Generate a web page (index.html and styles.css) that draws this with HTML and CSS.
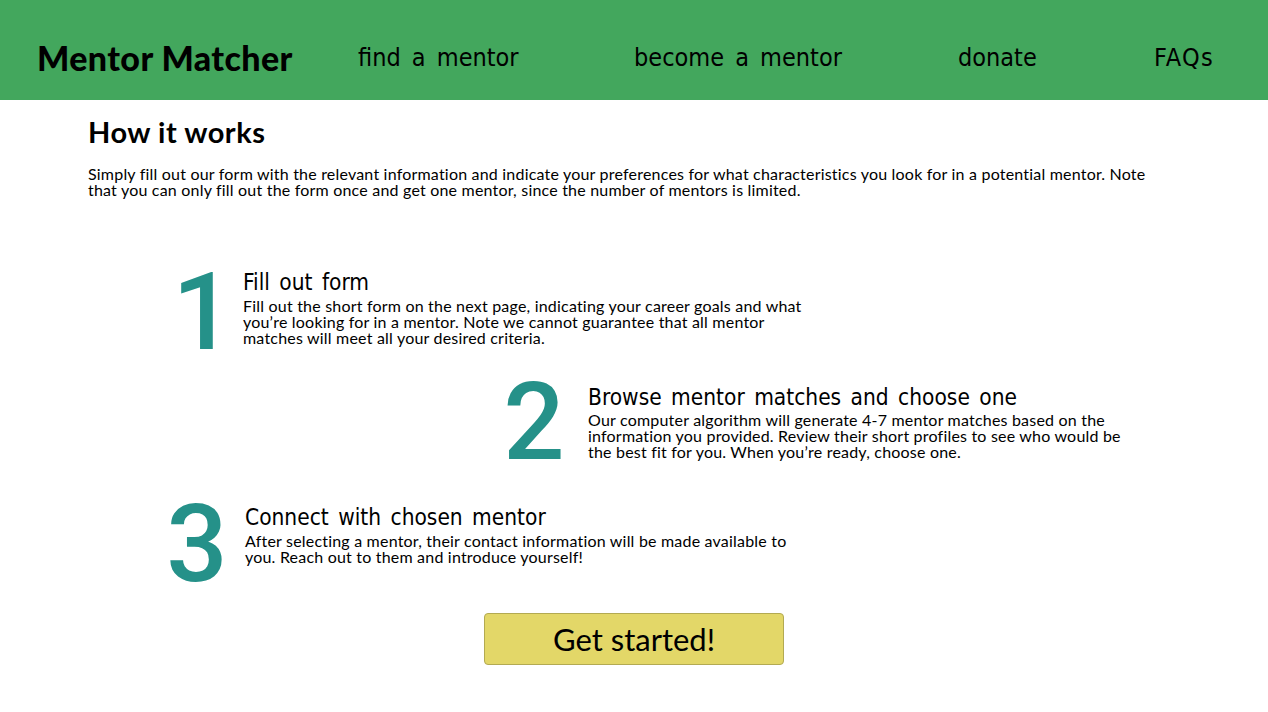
FILE: index.html
```html
<!DOCTYPE html>
<html>
<head>
<meta charset="utf-8">
<link rel="stylesheet" href="styles.css">
</head>
<body>
<header class="topbar">
  <div class="brand">Mentor Matcher</div>
  <nav class="nav">
    <a class="nav-link nav-find">find a mentor</a>
    <a class="nav-link nav-become">become a mentor</a>
    <a class="nav-link nav-donate">donate</a>
    <a class="nav-link nav-faq">FAQs</a>
  </nav>
</header>
<main class="content">
  <h1 class="title">How it works</h1>
  <p class="intro">Simply fill out our form with the relevant information and indicate your preferences for what characteristics you look for in a potential mentor. Note that you can only fill out the form once and get one mentor, since the number of mentors is limited.</p>
  <section class="steps">
    <div class="step step-1">
      <div class="num">1</div>
      <div class="step-text">
        <h2 class="step-title">Fill out form</h2>
        <p class="step-body">Fill out the short form on the next page, indicating your career goals and what you’re looking for in a mentor. Note we cannot guarantee that all mentor matches will meet all your desired criteria.</p>
      </div>
    </div>
    <div class="step step-2">
      <div class="num">2</div>
      <div class="step-text">
        <h2 class="step-title">Browse mentor matches and choose one</h2>
        <p class="step-body">Our computer algorithm will generate 4-7 mentor matches based on the information you provided. Review their short profiles to see who would be the best fit for you. When you’re ready, choose one.</p>
      </div>
    </div>
    <div class="step step-3">
      <div class="num">3</div>
      <div class="step-text">
        <h2 class="step-title">Connect with chosen mentor</h2>
        <p class="step-body">After selecting a mentor, their contact information will be made available to you. Reach out to them and introduce yourself!</p>
      </div>
    </div>
  </section>
  <div class="cta-row">
    <button class="cta">Get started!</button>
  </div>
</main>
</body>
</html>
```
FILE: styles.css
```css
* { box-sizing: border-box; }
html, body { margin: 0; padding: 0; background: #fff; }
body { font-family: Lato, "Noto Sans", sans-serif; color: #000; }

.topbar {
  height: 100px;
  background: #43a75d;
  display: flex;
  align-items: center;
  padding-left: 37px;
  padding-top: 14px;
}
.brand {
  font-family: Lato, sans-serif;
  font-weight: 900;
  font-size: 34px;
  letter-spacing: 0.4px;
  width: 321px;
}
.nav { display: flex; align-items: center; }
.nav-link {
  font-family: "Liberation Sans Narrow", "DejaVu Sans Condensed", "Roboto Condensed", sans-serif;
  font-size: 25px;
  word-spacing: 4px;
  color: #000;
}
.nav-find { width: 276px; }
.nav-become { width: 324px; }
.nav-donate { width: 196px; }
.nav-faq { letter-spacing: 1.2px; }

.content { padding: 18px 0 0 88px; }
.title {
  margin: 0;
  font-size: 29px;
  font-weight: 700;
  line-height: 28px;
  letter-spacing: 0.5px;
}
.intro {
  margin: 20px 0 0;
  font-size: 16px;
  line-height: 16px;
  letter-spacing: 0.2px;
  width: 1085px;
}

.steps { margin-top: 66px; display: flex; flex-direction: column; }
.step { display: flex; align-items: flex-start; }
.num {
  font-family: Roboto, "Open Sans", sans-serif;
  font-size: 108px;
  line-height: 90px;
  font-weight: 500;
  color: #259189;
  width: 94px;
  text-align: center;
  margin-top: 3px;
}
.step-1 { margin-left: 61px; }
.step-1 .num { padding-left: 14px; }
.step-2 { margin-left: 399px; margin-top: 22px; }
.step-2 .num { margin-right: 7px; margin-top: -2px; }
.step-3 { margin-left: 62px; margin-top: 32px; }
.step-3 .num { margin-right: 1px; margin-top: 0; }
.step-text { padding-top: 6px; }
.step-title {
  margin: 0;
  font-family: "Liberation Sans Narrow", "DejaVu Sans Condensed", "Roboto Condensed", sans-serif;
  font-weight: 400;
  font-size: 22.5px;
  line-height: 24px;
  word-spacing: 3px;
}
.step-body {
  margin: 4px 0 0;
  font-size: 16px;
  line-height: 16px;
  letter-spacing: 0.2px;
  width: 570px;
}
.step-2 .step-body { width: 552px; margin-top: 3px; }
.step-3 .step-body { width: 560px; }

.cta-row { display: flex; margin-top: 24px; padding-left: 396px; }
.cta {
  width: 300px;
  height: 52px;
  background: #e3d768;
  border: 1px solid #b3aa52;
  border-radius: 4px;
  font-family: Lato, sans-serif;
  font-size: 31px;
  color: #000;
}
```
